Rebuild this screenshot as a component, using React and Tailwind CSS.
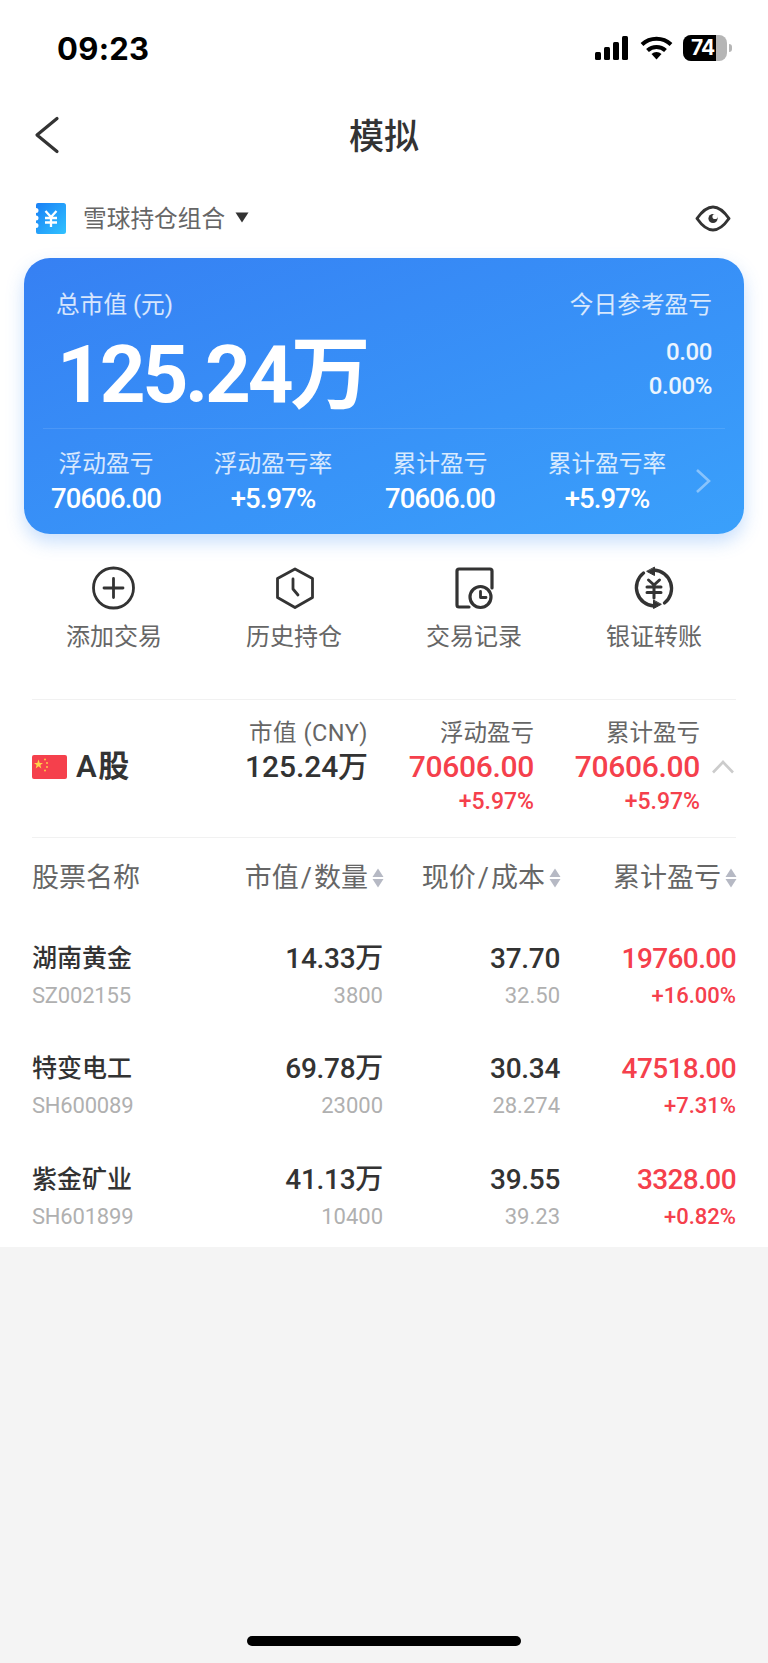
const RED = "text-[#f5404c]";

function SortArrows() {
  return (
    <svg width="12" height="20" viewBox="0 0 12 20" className="shrink-0 mr-[-1px]">
      <path d="M6 0.5 L11.5 9 H0.5 Z" fill="#b6b9c4" />
      <path d="M6 19.5 L11.5 11 H0.5 Z" fill="#b6b9c4" />
    </svg>
  );
}

function PlusIcon() {
  return (
    <svg width="44" height="44" viewBox="0 0 44 44" fill="none" stroke="#333" strokeWidth="2.8" strokeLinecap="round" strokeLinejoin="round">
      <circle cx="21.5" cy="22" r="20" />
      <path d="M21.5 12.5 V31.5 M12 22 H31" />
    </svg>
  );
}

function HexClockIcon() {
  return (
    <svg width="44" height="44" viewBox="0 0 44 44" fill="none" stroke="#333" strokeWidth="2.8" strokeLinecap="round" strokeLinejoin="round">
      <path d="M23 3 L40.5 12.5 V31.5 L23 41.5 L5.5 31.5 V12.5 Z" />
      <path d="M21 13 V23 L26 29" />
    </svg>
  );
}

function RecordIcon() {
  return (
    <svg width="44" height="44" viewBox="0 0 44 44" fill="none" stroke="#333" strokeWidth="3.2" strokeLinecap="round" strokeLinejoin="round">
      <path d="M17 41 H7 a2 2 0 0 1 -2 -2 V5 a2 2 0 0 1 2 -2 H38 a2 2 0 0 1 2 2 V22" />
      <circle cx="28.5" cy="31" r="10.5" />
      <path d="M28.5 25.5 V31.5 H34" strokeWidth="2.8" />
    </svg>
  );
}

function YenSwapIcon() {
  return (
    <svg width="44" height="44" viewBox="0 0 44 44" fill="none" stroke="#333" strokeWidth="3.4" strokeLinecap="round" strokeLinejoin="round">
      <path d="M22 4 A18.5 18.5 0 0 1 32.5 37" />
      <path d="M22 40 A18.5 18.5 0 0 1 11.5 7" />
      <path d="M22.5 1.5 V9.5 L15 5.5 Z" fill="#333" stroke="#333" strokeWidth="1" />
      <path d="M21.5 34.5 V42.5 L29 38.5 Z" fill="#333" stroke="#333" strokeWidth="1" />
      <path d="M16.5 14 L22 19 L27.5 14 M15 21 H29 M15 26.5 H29 M22 19 V32" strokeWidth="3" />
    </svg>
  );
}

function Action({ icon, label }) {
  return (
    <div className="flex flex-col items-center">
      <div className="w-[44px] h-[44px]">{icon}</div>
      <div className="mt-[11px] text-[24px] leading-[32px] text-[#666666]">{label}</div>
    </div>
  );
}

function CardStat({ label, value }) {
  return (
    <div className="flex flex-col items-center w-[167px]">
      <div className="text-[23.7px] leading-[36px] text-white/80">{label}</div>
      <div className="text-[27.5px] leading-[34px] tracking-[-0.9px] font-medium text-white">{value}</div>
    </div>
  );
}

function Stock({ name, code, value, qty, price, cost, pl, pct }) {
  return (
    <div className="flex h-[110.5px] pt-[23.5px]">
      <div className="w-[211px]">
        <div className="text-[25px] leading-[40px] font-medium text-[#333333]">{name}</div>
        <div className="text-[22px] leading-[34px] tracking-[-0.2px] text-[#b0b0b0]">{code}</div>
      </div>
      <div className="w-[140px] text-right">
        <div className="text-[28px] leading-[40px] tracking-[-0.3px] font-medium text-[#333333]">{value}</div>
        <div className="text-[22px] leading-[34px] text-[#b0b0b0]">{qty}</div>
      </div>
      <div className="w-[177px] text-right">
        <div className="text-[28px] leading-[40px] tracking-[-0.3px] font-medium text-[#333333]">{price}</div>
        <div className="text-[22px] leading-[34px] text-[#b0b0b0]">{cost}</div>
      </div>
      <div className="w-[176px] text-right">
        <div className={`text-[28px] leading-[40px] tracking-[-0.6px] font-medium ${RED}`}>{pl}</div>
        <div className={`text-[22px] leading-[34px] font-medium ${RED}`}>{pct}</div>
      </div>
    </div>
  );
}

function Header({ a, b }) {
  return (
    <>
      {a}
      <span className="mx-[2px]">/</span>
      {b}
    </>
  );
}

export default function App() {
  return (
    <div className="w-[768px] h-[1663px] flex flex-col bg-white overflow-hidden font-['Roboto','Noto_Sans_CJK_SC',sans-serif]">
      {/* status bar */}
      <div className="h-[96px] shrink-0 flex items-center pl-[57px] pr-[36px] justify-between">
        <div className="font-['Inter',sans-serif] font-bold text-[31px] leading-[36px] tracking-[0.3px] mt-[1px] text-black">09:23</div>
        <div className="flex items-center">
          <svg width="34" height="24" viewBox="0 0 34 24" fill="#000">
            <rect x="0" y="16" width="6" height="8" rx="1.5" />
            <rect x="9" y="11" width="6" height="13" rx="1.5" />
            <rect x="18" y="6" width="6" height="18" rx="1.5" />
            <rect x="27" y="0" width="6" height="24" rx="1.5" />
          </svg>
          <svg width="33" height="24" viewBox="0 0 33 24" fill="none" stroke="#000" strokeWidth="4" className="ml-[11px]">
            <path d="M2 8.5 A21 21 0 0 1 31 8.5" />
            <path d="M7.5 14.5 A13 13 0 0 1 25.5 14.5" />
            <path d="M11.5 18 A7.5 7.5 0 0 1 21.5 18 L16.5 23.5 Z" fill="#000" stroke="none" />
          </svg>
          <div className="ml-[10px] w-[44px] h-[26px] rounded-[8px] bg-[#b5b5b5] overflow-hidden flex">
            <div className="w-[33px] h-full bg-black flex items-center pl-[8px]">
              <span className="font-['Inter',sans-serif] font-bold text-[21px] leading-[26px] tracking-[-1px] text-white">74</span>
            </div>
          </div>
          <div className="ml-[2px] w-[3px] h-[8px] rounded-r-[3px] bg-[#b5b5b5]" />
        </div>
      </div>

      {/* nav */}
      <div className="h-[78px] shrink-0 flex items-center relative">
        <svg width="26" height="38" viewBox="0 0 26 38" fill="none" stroke="#333" strokeWidth="3.2" strokeLinecap="round" strokeLinejoin="round" className="ml-[34px]">
          <path d="M23 2.5 L3 19 L23 35.5" />
        </svg>
        <div className="absolute left-0 right-0 top-[20px] text-center text-[35px] leading-[44px] font-medium text-[#333333]">模拟</div>
      </div>

      {/* portfolio selector */}
      <div className="h-[84px] shrink-0 flex items-center pl-[35px] pr-[36px] pt-[4px]">
        <svg width="31" height="31" viewBox="0 0 31 31">
          <defs>
            <linearGradient id="logoGrad" x1="0" y1="0" x2="1" y2="1">
              <stop offset="0" stopColor="#1a80f6" />
              <stop offset="1" stopColor="#30c2ff" />
            </linearGradient>
          </defs>
          <path d="M3 0 H28.5 a2.5 2.5 0 0 1 2.5 2.5 V28.5 a2.5 2.5 0 0 1 -2.5 2.5 H3 a2 2 0 0 1 -2 -2 V25 a2.5 2.5 0 0 0 0 -5 V17.5 a2.5 2.5 0 0 0 0 -5 V10 a2.5 2.5 0 0 0 0 -5 V2 a2 2 0 0 1 2 -2 Z" fill="url(#logoGrad)" />
          <path d="M10.5 8 L16 14 L21.5 8 M10 15 H22 M10 19.5 H22 M16 14 V24" fill="none" stroke="#fff" strokeWidth="2.3" />
        </svg>
        <div className="ml-[17px] mt-[2px] text-[23.7px] leading-[32px] text-[#666666]">雪球持仓组合</div>
        <svg width="14" height="11" viewBox="0 0 14 11" className="ml-[10px] mt-[-2px]">
          <path d="M0.5 0.5 H13.5 L7 10.5 Z" fill="#333" />
        </svg>
        <svg width="36" height="27" viewBox="0 0 36 27" fill="none" className="ml-auto mr-[1px]">
          <path d="M2 13.5 C8 5 13 2 18 2 C23 2 28 5 34 13.5 C28 22 23 25 18 25 C13 25 8 22 2 13.5 Z" stroke="#333" strokeWidth="3" strokeLinejoin="round" />
          <circle cx="18" cy="13.5" r="4.6" fill="#333" />
          <circle cx="20" cy="11.5" r="2.6" fill="#fff" />
        </svg>
      </div>

      {/* card */}
      <div className="mx-[24px] h-[276px] shrink-0 rounded-[26px] bg-gradient-to-br from-[#3680f3] to-[#3aa0fb] shadow-[0_8px_18px_rgba(58,140,245,0.28)] flex flex-col">
        <div className="flex justify-between px-[32px] pt-[31px]">
          <div className="text-[23.7px] leading-[32px] text-white/80">总市值 (元)</div>
          <div className="text-[23.7px] leading-[32px] text-white/80">今日参考盈亏</div>
        </div>
        <div className="flex justify-between pl-[33px] pr-[32px] h-[107px]">
          <div className="mt-[14px] text-[80px] leading-[80px] font-bold tracking-[-3.2px] text-white">125.24万</div>
          <div className="mt-[14px] text-right text-[24px] leading-[34px] tracking-[-0.4px] font-medium text-white/90">
            <div>0.00</div>
            <div>0.00%</div>
          </div>
        </div>
        <div className="mx-[19px] h-px bg-white/10" />
        <div className="flex items-center ml-[-1.5px] pt-[17px]">
          <CardStat label="浮动盈亏" value="70606.00" />
          <CardStat label="浮动盈亏率" value="+5.97%" />
          <CardStat label="累计盈亏" value="70606.00" />
          <CardStat label="累计盈亏率" value="+5.97%" />
          <svg width="16" height="26" viewBox="0 0 16 26" fill="none" stroke="#fff" strokeOpacity="0.4" strokeWidth="2.6" className="ml-[4px]">
            <path d="M2 2 L14 13 L2 24" />
          </svg>
        </div>
      </div>

      {/* actions */}
      <div className="mx-[24px] h-[165px] shrink-0 pt-[32px] grid grid-cols-4">
        <Action icon={<PlusIcon />} label="添加交易" />
        <Action icon={<HexClockIcon />} label="历史持仓" />
        <Action icon={<RecordIcon />} label="交易记录" />
        <Action icon={<YenSwapIcon />} label="银证转账" />
      </div>

      {/* A-share summary */}
      <div className="mx-[32px] shrink-0 border-t border-b border-[#f1f1f1] h-[139px] flex pt-[17px]">
        <div className="w-[194px] h-[100px] flex items-center">
          <svg width="35" height="24" viewBox="0 0 35 24">
            <rect width="35" height="24" rx="2" fill="#f5404c" />
            <path d="M6.5 4.5 L7.7 8 H11 L8.4 10 L9.3 13.5 L6.5 11.3 L3.7 13.5 L4.6 10 L2 8 H5.3 Z" fill="#ffd24a" />
            <circle cx="13" cy="4.5" r="0.9" fill="#ffd24a" />
            <circle cx="15" cy="8" r="0.9" fill="#ffd24a" />
            <circle cx="15" cy="12" r="0.9" fill="#ffd24a" />
            <circle cx="13" cy="15.5" r="0.9" fill="#ffd24a" />
          </svg>
          <div className="ml-[9px] text-[31px] leading-[36px] tracking-[1.5px] font-semibold text-[#333333]">A股</div>
        </div>
        <div className="w-[142px] text-right whitespace-nowrap">
          <div className="text-[23.5px] leading-[32px] tracking-[0.5px] text-[#666666]">市值 (CNY)</div>
          <div className="text-[30px] leading-[36px] tracking-[-0.1px] font-medium text-[#333333]">125.24万</div>
        </div>
        <div className="w-[166px] text-right">
          <div className="text-[23.5px] leading-[32px] text-[#666666]">浮动盈亏</div>
          <div className={`text-[30px] leading-[36px] tracking-[-0.3px] font-medium ${RED}`}>70606.00</div>
          <div className={`mt-[2px] text-[23px] leading-[30px] font-medium ${RED}`}>+5.97%</div>
        </div>
        <div className="w-[166px] text-right">
          <div className="text-[23.5px] leading-[32px] text-[#666666]">累计盈亏</div>
          <div className={`text-[30px] leading-[36px] tracking-[-0.3px] font-medium ${RED}`}>70606.00</div>
          <div className={`mt-[2px] text-[23px] leading-[30px] font-medium ${RED}`}>+5.97%</div>
        </div>
        <svg width="24" height="14" viewBox="0 0 24 14" fill="none" stroke="#cccccc" strokeWidth="2.6" className="ml-[11px] mt-[43px]">
          <path d="M2 12.5 L12 2 L22 12.5" />
        </svg>
      </div>

      {/* table header */}
      <div className="mx-[32px] h-[77px] pt-[2px] shrink-0 flex items-center text-[27px] leading-[36px] text-[#666666]">
        <div className="w-[211px]">股票名称</div>
        <div className="w-[140px] flex items-center justify-end gap-[4px] whitespace-nowrap"><span><Header a="市值" b="数量" /></span><SortArrows /></div>
        <div className="w-[177px] flex items-center justify-end gap-[4px] whitespace-nowrap"><span><Header a="现价" b="成本" /></span><SortArrows /></div>
        <div className="w-[176px] flex items-center justify-end gap-[4px] whitespace-nowrap">累计盈亏<SortArrows /></div>
      </div>

      {/* rows */}
      <div className="mx-[32px] shrink-0">
        <Stock name="湖南黄金" code="SZ002155" value="14.33万" qty="3800" price="37.70" cost="32.50" pl="19760.00" pct="+16.00%" />
        <Stock name="特变电工" code="SH600089" value="69.78万" qty="23000" price="30.34" cost="28.274" pl="47518.00" pct="+7.31%" />
        <Stock name="紫金矿业" code="SH601899" value="41.13万" qty="10400" price="39.55" cost="39.23" pl="3328.00" pct="+0.82%" />
      </div>

      {/* empty grey area */}
      <div className="flex-1 bg-[#f4f4f4] flex flex-col items-center justify-end pb-[17px]">
        <div className="w-[274px] h-[10px] rounded-full bg-black" />
      </div>
    </div>
  );
}
